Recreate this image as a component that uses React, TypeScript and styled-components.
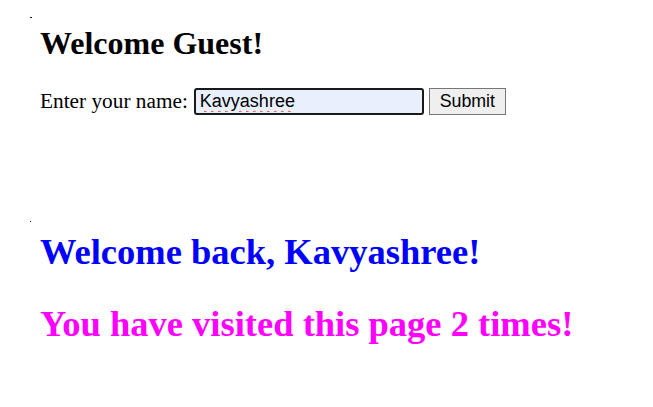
import React from "react";
import styled, { createGlobalStyle } from "styled-components";

const Global = createGlobalStyle`
  html, body { margin: 0; padding: 0; background: #fff; }
  body { font-family: "Liberation Serif", "Times New Roman", serif; color: #000; }
`;

const Page = styled.div`
  display: flex;
  flex-direction: column;
  padding: 17px 0 0 30px;
`;

const Section = styled.section<{ $mark: number; $gap: number }>`
  position: relative;
  padding-left: 10px;
  margin-top: ${(p) => p.$gap}px;
  &::before {
    content: "";
    position: absolute;
    left: 0;
    top: 0;
    width: ${(p) => p.$mark}px;
    height: 1px;
    background: #222;
  }
`;

const Title = styled.h2`
  font-size: 32px;
  line-height: 37px;
  font-weight: bold;
  margin: 8px 0 26px;
`;

const Form = styled.form`
  display: flex;
  align-items: center;
  font-size: 21.3px;
`;

const Label = styled.label`
  font-size: 21.3px;
  margin-right: 6px;
`;

const Input = styled.input`
  box-sizing: border-box;
  width: 230px;
  height: 27px;
  margin: 0 5px 0 0;
  padding: 1px 4px;
  font-family: "Liberation Sans", Arial, sans-serif;
  font-size: 18px;
  color: #000;
  background: #e8f0fe;
  border: 2px solid #1a1a1a;
  border-radius: 3px;
  outline: none;
  text-decoration-line: underline;
  text-decoration-style: wavy;
  text-decoration-color: #e8403a;
  text-decoration-thickness: 1px;
  text-underline-offset: 3px;
`;

const Button = styled.button`
  box-sizing: border-box;
  height: 27px;
  width: 77px;
  margin: 0;
  padding: 0 6px;
  font-family: "Liberation Sans", Arial, sans-serif;
  font-size: 17.8px;
  color: #000;
  background: #efefef;
  border: 1px solid #767676;
  border-radius: 0;
`;

const Message = styled.h1<{ $color: string }>`
  font-size: 36.5px;
  font-weight: bold;
  color: ${(p) => p.$color};
  margin: 0;
  line-height: 41px;
`;

const Messages = styled.div`
  display: flex;
  flex-direction: column;
  gap: 31px;
  padding-top: 10px;
`;

export default function App() {
  return (
    <>
      <Global />
      <Page>
        <Section $mark={2} $gap={0}>
          <Title>Welcome Guest!</Title>
          <Form onSubmit={(e) => e.preventDefault()}>
            <Label htmlFor="name">Enter your name:</Label>
            <Input id="name" defaultValue="Kavyashree" spellCheck={false} />
            <Button type="submit">Submit</Button>
          </Form>
        </Section>
        <Section $mark={1} $gap={106}>
          <Messages>
            <Message $color="#0000ff">Welcome back, Kavyashree!</Message>
            <Message $color="#ff00ff">You have visited this page 2 times!</Message>
          </Messages>
        </Section>
      </Page>
    </>
  );
}
